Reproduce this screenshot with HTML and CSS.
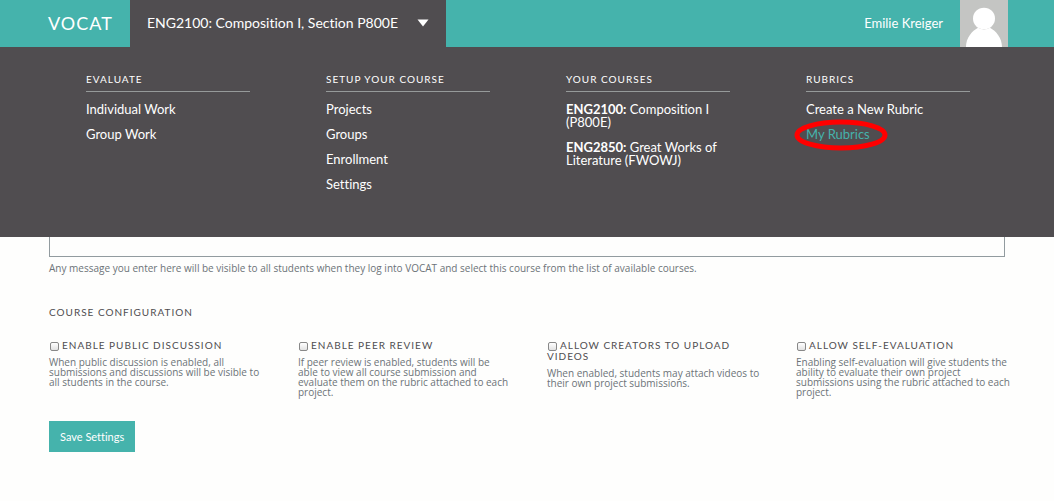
FILE: index.html
```
<!DOCTYPE html>
<html lang="en">
<head>
<meta charset="utf-8">
<title>VOCAT</title>
<link rel="stylesheet" href="styles.css">
</head>
<body>
<header class="site-header">
  <div class="bar">
    <a class="logo" href="#">VOCAT</a>
    <button class="course-toggle" type="button" aria-expanded="true">ENG2100: Composition I, Section P800E
      <svg class="caret" viewBox="0 0 12 8" aria-hidden="true"><path d="M0.5 0.5h11L6 7.5z" fill="#fff"/></svg>
    </button>
    <a class="user" href="#">Emilie Kreiger</a>
    <svg class="avatar" viewBox="0 0 48 47" role="img" aria-label="Profile picture"><path fill="#c4c5c3" d="M0 0h48v47H0z"/><ellipse cx="24" cy="18.500" rx="11" ry="10.800" fill="#fff"/><path fill="#fff" d="M6 47C6 38 12 31 18 27.800Q24 31 30 27.800C36 31 42 38 42 47z"/></svg>
  </div>
  <nav class="menu" aria-label="Course">
    <div class="menu-grid">
      <section>
        <h2>Evaluate</h2>
        <ul><li><a href="#">Individual Work</a></li><li><a href="#">Group Work</a></li></ul>
      </section>
      <section>
        <h2>Setup Your Course</h2>
        <ul><li><a href="#">Projects</a></li><li><a href="#">Groups</a></li><li><a href="#">Enrollment</a></li><li><a href="#">Settings</a></li></ul>
      </section>
      <section>
        <h2>Your Courses</h2>
        <ul><li><a href="#"><strong>ENG2100:</strong> Composition I (P800E)</a></li><li><a href="#"><strong>ENG2850:</strong> Great Works of Literature (FWOWJ)</a></li></ul>
      </section>
      <section>
        <h2>Rubrics</h2>
        <ul><li><a href="#">Create a New Rubric</a></li><li class="marked"><a class="active" href="#">My Rubrics</a>
          <svg class="ring" viewBox="0 0 94 32" aria-hidden="true"><ellipse cx="47" cy="16" rx="44" ry="13" fill="none" stroke="#f00" stroke-width="5"/></svg></li></ul>
      </section>
    </div>
  </nav>
</header>
<main class="content">
  <form>
    <textarea class="message" id="message" aria-label="Course message" aria-describedby="message-hint"></textarea>
    <p class="hint" id="message-hint">Any message you enter here will be visible to all students when they log into VOCAT and select this course from the list of available courses.</p>
    <h2 class="section-title">Course Configuration</h2>
    <div class="options">
      <div class="option">
        <label for="discussion"><input type="checkbox" id="discussion">Enable Public Discussion</label>
        <p>When public discussion is enabled, all submissions and discussions will be visible to all students in the course.</p>
      </div>
      <div class="option">
        <label for="peer"><input type="checkbox" id="peer">Enable Peer Review</label>
        <p>If peer review is enabled, students will be able&nbsp;to view all course submission and evaluate them on the rubric attached to each project.</p>
      </div>
      <div class="option">
        <label for="upload"><input type="checkbox" id="upload">Allow Creators to Upload Videos</label>
        <p>When enabled, students may attach videos to their own project submissions.</p>
      </div>
      <div class="option">
        <label for="self"><input type="checkbox" id="self">Allow Self-Evaluation</label>
        <p>Enabling self-evaluation will give students the ability to evaluate their own project submissions using the rubric attached to each project.</p>
      </div>
    </div>
    <button class="save" type="submit">Save Settings</button>
  </form>
</main>
</body>
</html>
```
FILE: styles.css
```
* { box-sizing: border-box; }
body { margin: 0; background: #fefefd; color: #4f4d50; font-family: Lato, "Open Sans", sans-serif; font-variant-ligatures: none; }
h2, p, ul { margin: 0; padding: 0; }
ul { list-style: none; }
a { color: inherit; text-decoration: none; }
button, textarea { font-family: inherit; font-variant-ligatures: none; }

.site-header { position: relative; background: #45b3ac; color: #fff; }
.bar { display: flex; align-items: center; max-width: 962px; height: 47px; margin: 0 auto; padding-bottom: 2px; }
.logo { width: 84px; padding-left: 2px; font-size: 18px; line-height: 20px; letter-spacing: 1px; }
.course-toggle { display: flex; align-items: center; gap: 19px; align-self: stretch; margin-bottom: -2px; padding: 0 17px 2px; border: 0; background: #504d50; color: #fff; font-size: 14px; line-height: 18px; }
.caret { width: 12px; height: 8px; }
.user { margin-left: auto; margin-right: 17px; font-size: 13px; line-height: 16px; }
.avatar { width: 48px; height: 47px; margin-bottom: -2px; }

.menu { position: absolute; top: 100%; left: 0; right: 0; min-height: 190px; padding: 26px 0 40px; background: #504d50; }
.menu-grid { display: grid; grid-template-columns: repeat(4, 1fr); max-width: 960px; margin: 0 auto; }
.menu section { padding: 0 37px 0 39px; }
.menu h2 { padding-bottom: 5px; border-bottom: 1px solid #969a9a; font-size: 10px; line-height: 13px; font-weight: 400; letter-spacing: 1px; text-transform: uppercase; white-space: nowrap; }
.menu ul { display: grid; gap: 12px; padding-top: 11px; font-size: 13px; line-height: 13px; }
.active { color: #45b3ac; }
.marked { position: relative; }
.ring { position: absolute; left: -12px; top: -9px; width: 94px; height: 32px; pointer-events: none; }

.content { max-width: 956px; margin: 0 auto; padding-top: 100px; }
.message { display: block; width: 100%; height: 110px; border: 1px solid #929b9f; background: #fefefd; resize: none; font-size: 13px; }
.hint { padding-top: 4px; color: #6c7378; font-family: "Open Sans", sans-serif; font-size: 10px; line-height: 14px; }
.section-title { padding-top: 30px; font-size: 10px; line-height: 14px; font-weight: 400; letter-spacing: 1px; text-transform: uppercase; }
.options { display: grid; grid-template-columns: repeat(4, 1fr); column-gap: 40px; padding-top: 21px; }
.option label { display: block; font-size: 10px; line-height: 11px; letter-spacing: 1px; text-transform: uppercase; }
.option input { appearance: none; width: 9px; height: 9px; margin: 0 3px 0 1px; border: 1px solid #888; border-radius: 2px; background: linear-gradient(#fff, #e2e2e2); vertical-align: -2px; }
.option p { padding-top: 6px; margin-right: -8px; color: #6c7378; font-family: "Open Sans", sans-serif; font-size: 10px; line-height: 10px; }
.save { height: 31px; margin-top: 24px; padding: 0 11px; border: 0; background: #45b3ac; color: #fff; font-size: 11px; line-height: 14px; }
```
